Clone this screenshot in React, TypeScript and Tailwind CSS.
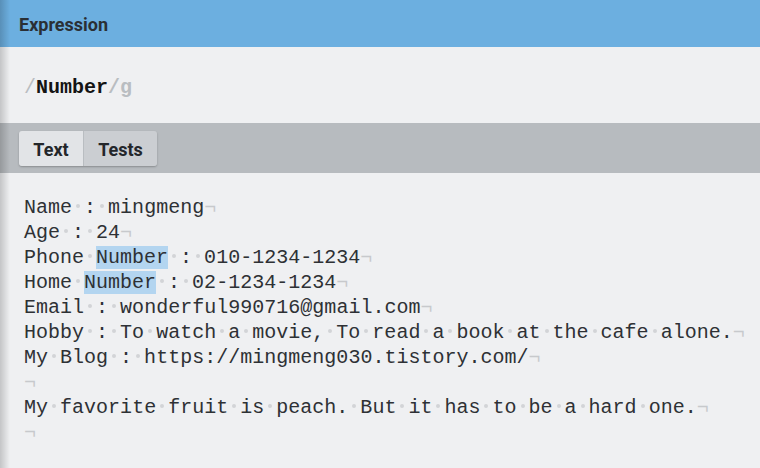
import React from "react";

const mono = { fontFamily: '"Liberation Mono", "DejaVu Sans Mono", monospace' };

function Dot() {
  return <span className="inline-block w-[4px] h-[4px] rounded-full bg-[#d2d4d7] mx-[4px] mb-[5px]" />;
}

function Line({ text }: { text: string }) {
  const parts: React.ReactNode[] = [];
  const re = /Number/g;
  let last = 0;
  let m: RegExpExecArray | null;
  const pushPlain = (s: string, keyBase: string) => {
    s.split("").forEach((ch, i) => {
      if (ch === " ") parts.push(<Dot key={keyBase + i} />);
      else parts.push(<React.Fragment key={keyBase + i}>{ch}</React.Fragment>);
    });
  };
  while ((m = re.exec(text))) {
    pushPlain(text.slice(last, m.index), "p" + last + "-");
    parts.push(
      <span key={"m" + m.index} className="bg-[#b3d5f0]">
        {m[0]}
      </span>
    );
    last = m.index + m[0].length;
  }
  pushPlain(text.slice(last), "e" + last + "-");
  return (
    <div className="h-[25px] leading-[25px] whitespace-pre">
      {parts}
      <span className="text-[#c7c9cc]">¬</span>
    </div>
  );
}

const lines = [
  "Name : mingmeng",
  "Age : 24",
  "Phone Number : 010-1234-1234",
  "Home Number : 02-1234-1234",
  "Email : wonderful990716@gmail.com",
  "Hobby : To watch a movie, To read a book at the cafe alone.",
  "My Blog : https://mingmeng030.tistory.com/",
  "",
  "My favorite fruit is peach. But it has to be a hard one.",
  "",
];

export default function App() {
  return (
    <div
      className="relative w-[760px] h-[468px] overflow-hidden bg-[#eff0f2] flex flex-col"
      style={{ fontFamily: 'Roboto, "Liberation Sans", sans-serif' }}
    >
      <div className="h-[47px] shrink-0 bg-[#6cafe0] flex items-center px-[19px]">
        <span className="text-[18px] font-bold text-[#2a2f35] pt-[1px]">Expression</span>
      </div>
      <div className="h-[76px] shrink-0 flex items-center px-[24px] pt-[5px] text-[20px] font-bold" style={mono}>
        <span className="text-[#b9bdc1] font-normal">/</span>
        <span className="text-[#141414]">Number</span>
        <span className="text-[#b9bdc1]">/g</span>
      </div>
      <div className="h-[50px] shrink-0 bg-[#b7bbbf] flex items-center px-[19px]">
        <div className="flex rounded-[3px] shadow-[0_1px_2px_rgba(0,0,0,0.25)] overflow-hidden h-[35px]">
          <div className="w-[65px] bg-[#e2e4e7] flex items-center justify-center pt-[2px] text-[18px] font-bold text-[#23262a] border-r border-[#b9bdc1]">
            Text
          </div>
          <div className="w-[73px] bg-[#cbced2] flex items-center justify-center pt-[2px] text-[18px] font-bold text-[#23262a]">
            Tests
          </div>
        </div>
      </div>
      <div className="flex-1 px-[24px] pt-[22px] text-[20px] text-[#2e3135]" style={mono}>
        {lines.map((l, i) => (
          <Line key={i} text={l} />
        ))}
      </div>
      <div className="pointer-events-none absolute left-0 top-0 bottom-0 w-[10px] bg-gradient-to-r from-[rgba(0,0,0,0.18)] to-transparent" />
    </div>
  );
}
